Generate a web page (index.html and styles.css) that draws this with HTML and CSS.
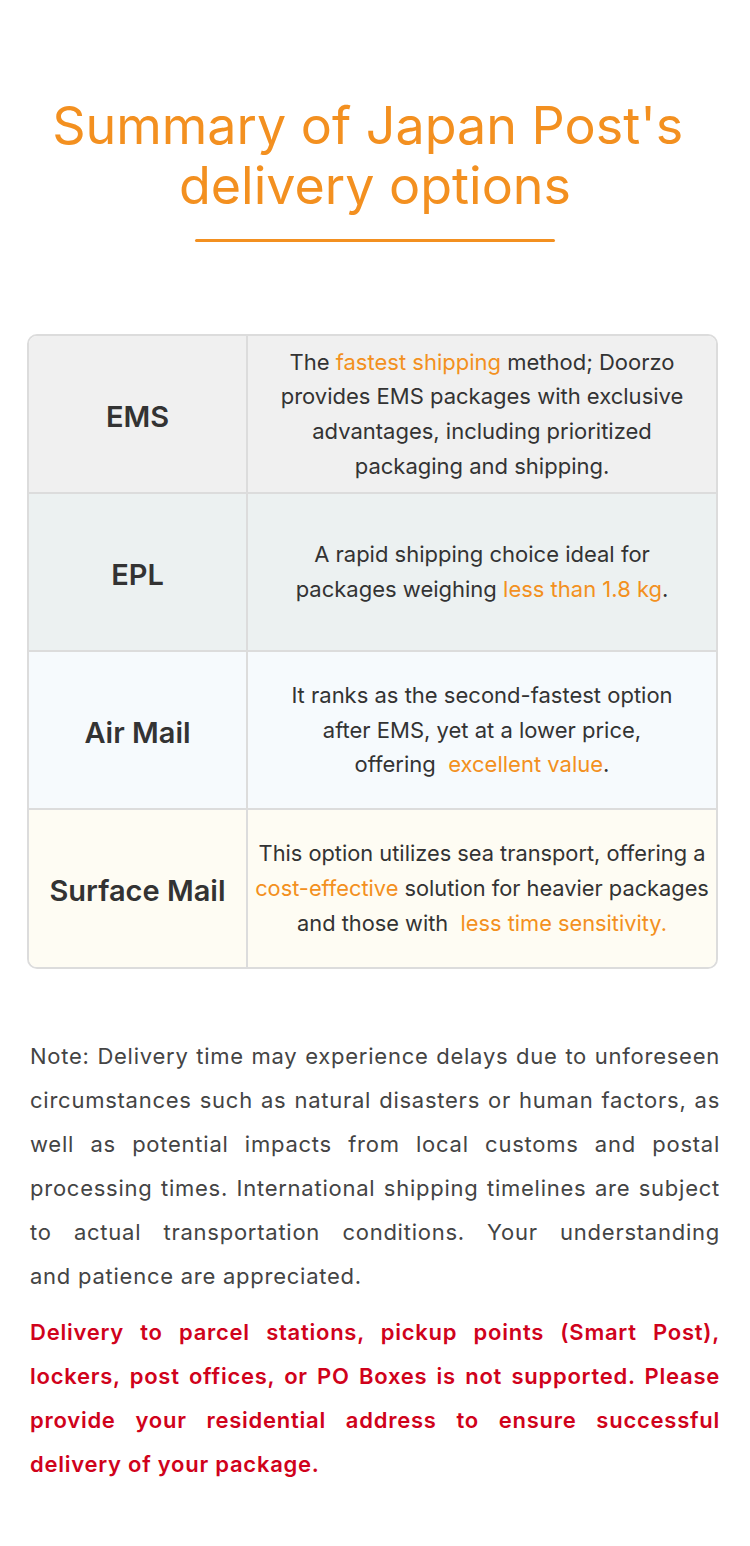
FILE: index.html
```html
<!DOCTYPE html>
<html lang="en">
<head>
<meta charset="utf-8">
<title>Summary of Japan Post's delivery options</title>
<link rel="stylesheet" href="styles.css">
</head>
<body>
<main class="page">
  <h1 class="title">Summary of Japan Post's&nbsp;<br>delivery options</h1>
  <div class="title-rule"></div>

  <section class="table">
    <div class="row row-ems">
      <div class="label">EMS</div>
      <div class="desc">The <span class="hl">fastest shipping</span> method; Doorzo provides EMS packages with exclusive advantages, including prioritized packaging and shipping.</div>
    </div>
    <div class="row row-epl">
      <div class="label">EPL</div>
      <div class="desc">A rapid shipping choice ideal for<br>packages weighing <span class="hl">less than 1.8 kg</span>.</div>
    </div>
    <div class="row row-air">
      <div class="label">Air Mail</div>
      <div class="desc">It ranks as the second-fastest option<br>after EMS, yet at a lower price,<br>offering &nbsp;<span class="hl">excellent value</span>.</div>
    </div>
    <div class="row row-surface">
      <div class="label">Surface Mail</div>
      <div class="desc desc-wide">This option utilizes sea transport, offering a <span class="hl">cost-effective</span> solution for heavier packages and those with &nbsp;<span class="hl">less time sensitivity.</span></div>
    </div>
  </section>

  <p class="note">Note: Delivery time may experience delays due to unforeseen circumstances such as natural disasters or human factors, as well as potential impacts from local customs and postal processing times. International shipping timelines are subject to actual transportation conditions. Your understanding and&nbsp;patience are appreciated.</p>
  <p class="warning">Delivery to parcel stations, pickup points (Smart Post), lockers, post offices, or PO Boxes is not supported. Please provide your residential address to ensure successful delivery of your package.</p>
</main>
</body>
</html>
```

FILE: styles.css
```css
html, body {
  margin: 0;
  padding: 0;
  background: #ffffff;
}

body {
  font-family: Inter, "Noto Sans", "Liberation Sans", sans-serif;
  color: #333333;
}

.page {
  padding: 96px 30px 40px;
  display: flex;
  flex-direction: column;
  align-items: center;
}

.title {
  margin: 0;
  font-size: 52px;
  line-height: 60px;
  font-weight: 400;
  color: #f39020;
  text-align: center;
}

.title-rule {
  width: 360px;
  height: 3px;
  border-radius: 2px;
  background: #f39020;
  margin-top: 23px;
}

.table {
  margin: 92px 2px 0 -3px;
  align-self: stretch;
  border: 2px solid #dcdcdc;
  border-radius: 10px;
  overflow: hidden;
}

.row {
  display: grid;
  grid-template-columns: 219px 1fr;
  height: 158px;
  box-sizing: border-box;
  border-bottom: 2px solid #dcdcdc;
}

.row:last-child {
  border-bottom: none;
  height: 157px;
}

.row-ems { background: #f0f0f0; }
.row-epl { background: #ecf1f1; }
.row-air { background: #f6fafd; }
.row-surface { background: #fefcf3; }

.label {
  display: flex;
  align-items: center;
  justify-content: center;
  border-right: 2px solid #dcdcdc;
  font-size: 29px;
  font-weight: 600;
  color: #333333;
  padding-top: 4px;
  box-sizing: border-box;
}

.desc {
  align-self: center;
  text-align: center;
  padding: 0 20px;
  font-size: 22px;
  line-height: 34.7px;
  color: #333333;
}

.desc-wide {
  padding: 0 2px;
  font-size: 21.8px;
}

.hl {
  color: #f39020;
}

.note {
  margin: 65px 0 0;
  align-self: stretch;
  font-size: 22px;
  line-height: 44px;
  letter-spacing: 0.75px;
  color: #444444;
  text-align: justify;
}

.warning {
  margin: 12px 0 0;
  align-self: stretch;
  font-size: 22px;
  line-height: 44px;
  letter-spacing: 0.75px;
  font-weight: 600;
  color: #d0021b;
  text-align: justify;
}
```
